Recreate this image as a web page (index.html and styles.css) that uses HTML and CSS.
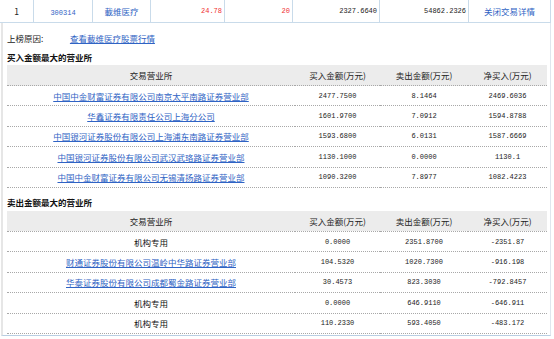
FILE: index.html
```html
<!DOCTYPE html>
<html lang="zh-CN">
<head>
  <meta charset="UTF-8">
  <title>龙虎榜详情</title>
  <link rel="stylesheet" href="styles.css">
</head>
<body>
  <div class="page">
    <table class="summary">
      <tr>
        <td class="c-no">1</td>
        <td class="c-code"><a href="#">300314</a></td>
        <td class="c-name"><a href="#">載维医疗</a></td>
        <td class="num up">24.78</td>
        <td class="num up">20</td>
        <td class="num">2327.6640</td>
        <td class="num">54862.2326</td>
        <td class="c-op"><a href="#">关闭交易详情</a></td>
      </tr>
    </table>

    <div class="detail">
      <div class="reason">
        <span class="reason-label">上榜原因:</span>
        <a href="#" class="ul">查看載维医疗股票行情</a>
      </div>

      <h3 class="section-title">买入金额最大的营业所</h3>
      <table class="brokers">
        <thead>
          <tr>
            <th>交易营业所</th>
            <th>买入金额(万元)</th>
            <th>卖出金额(万元)</th>
            <th>净买入(万元)</th>
          </tr>
        </thead>
        <tbody>
          <tr>
            <td><a href="#" class="ul">中国中金财富证券有限公司南京太平南路证券营业部</a></td>
            <td class="n">2477.7500</td>
            <td class="n">8.1464</td>
            <td class="n">2469.6036</td>
          </tr>
          <tr>
            <td><a href="#" class="ul">华鑫证券有限责任公司上海分公司</a></td>
            <td class="n">1601.9700</td>
            <td class="n">7.0912</td>
            <td class="n">1594.8788</td>
          </tr>
          <tr>
            <td><a href="#" class="ul">中国银河证券股份有限公司上海浦东南路证券营业部</a></td>
            <td class="n">1593.6800</td>
            <td class="n">6.0131</td>
            <td class="n">1587.6669</td>
          </tr>
          <tr>
            <td><a href="#" class="ul">中国银河证券股份有限公司武汉武珞路证券营业部</a></td>
            <td class="n">1130.1000</td>
            <td class="n">0.0000</td>
            <td class="n">1130.1</td>
          </tr>
          <tr>
            <td><a href="#" class="ul">中国中金财富证券有限公司无锡清扬路证券营业部</a></td>
            <td class="n">1090.3200</td>
            <td class="n">7.8977</td>
            <td class="n">1082.4223</td>
          </tr>
        </tbody>
      </table>

      <h3 class="section-title sell">卖出金额最大的营业所</h3>
      <table class="brokers">
        <thead>
          <tr>
            <th>交易营业所</th>
            <th>买入金额(万元)</th>
            <th>卖出金额(万元)</th>
            <th>净买入(万元)</th>
          </tr>
        </thead>
        <tbody>
          <tr>
            <td class="inst">机构专用</td>
            <td class="n">0.0000</td>
            <td class="n">2351.8700</td>
            <td class="n">-2351.87</td>
          </tr>
          <tr>
            <td><a href="#" class="ul">财通证券股份有限公司温岭中华路证券营业部</a></td>
            <td class="n">104.5320</td>
            <td class="n">1020.7300</td>
            <td class="n">-916.198</td>
          </tr>
          <tr>
            <td><a href="#" class="ul">华泰证券股份有限公司成都蜀金路证券营业部</a></td>
            <td class="n">30.4573</td>
            <td class="n">823.3030</td>
            <td class="n">-792.8457</td>
          </tr>
          <tr>
            <td class="inst">机构专用</td>
            <td class="n">0.0000</td>
            <td class="n">646.9110</td>
            <td class="n">-646.911</td>
          </tr>
          <tr>
            <td class="inst">机构专用</td>
            <td class="n">110.2330</td>
            <td class="n">593.4050</td>
            <td class="n">-483.172</td>
          </tr>
        </tbody>
      </table>
    </div>
  </div>
</body>
</html>
```

FILE: styles.css
```css
body {
  margin: 0;
  background: #fff;
  font-family: "Noto Sans CJK SC", "Liberation Sans", sans-serif;
  font-size: 8.5px;
  color: #222;
}
a {
  color: #2f63c4;
  text-decoration: none;
}
a.ul {
  text-decoration: underline;
}
.page {
  width: 551px;
}

/* top summary row */
.summary {
  width: 551px;
  border-collapse: collapse;
  table-layout: fixed;
}
.summary td {
  height: 22px;
  padding: 0 2px;
  border-right: 1px solid #c9dbea;
  border-bottom: 1px solid #c9dbea;
  text-align: center;
  white-space: nowrap;
}
.summary td:nth-child(1) { width: 29px; }
.summary td:nth-child(2) { width: 54px; }
.summary td:nth-child(3) { width: 53px; }
.summary td:nth-child(4) { width: 69px; }
.summary td:nth-child(5) { width: 63px; }
.summary td:nth-child(6) { width: 82px; }
.summary td:nth-child(7) { width: 84px; }
.summary td.num {
  text-align: right;
  font-family: "Liberation Mono", monospace;
  font-size: 7px;
}
.summary .c-code a {
  font-family: "Liberation Mono", monospace;
  font-size: 7px;
}
.summary td.up {
  color: #f03030;
}

/* detail panel */
.detail {
  margin-left: 1px;
  border-left: 2px solid #e6e6e6;
  border-right: 1px solid #dfe6ee;
  border-bottom: 1px solid #b9cfe3;
  padding: 8px 0 1px 4px;
}
.reason {
  line-height: 14px;
}
.reason-label {
  display: inline-block;
  width: 61px;
}
.section-title {
  margin: 5px 0 1px;
  font-size: 8.5px;
  line-height: 14px;
  font-weight: bold;
  color: #111;
}
.section-title.sell {
  margin-top: 7px;
  margin-bottom: 2px;
}

.brokers {
  width: 540px;
  border-collapse: collapse;
  table-layout: fixed;
}
.brokers th,
.brokers td {
  padding: 0;
  text-align: center;
  white-space: nowrap;
  border-bottom: 1px dotted #a8a8a8;
}
.brokers th {
  height: 20px;
  background: #ececec;
  font-weight: normal;
  color: #222;
}
.brokers td {
  height: 19.4px;
}
.brokers th:nth-child(1) { width: 288px; }
.brokers th:nth-child(2) { width: 85px; }
.brokers th:nth-child(3) { width: 88px; }
.brokers td.n {
  font-family: "Liberation Mono", monospace;
  font-size: 7px;
  color: #222;
}
.brokers td.inst {
  color: #111;
}
```
